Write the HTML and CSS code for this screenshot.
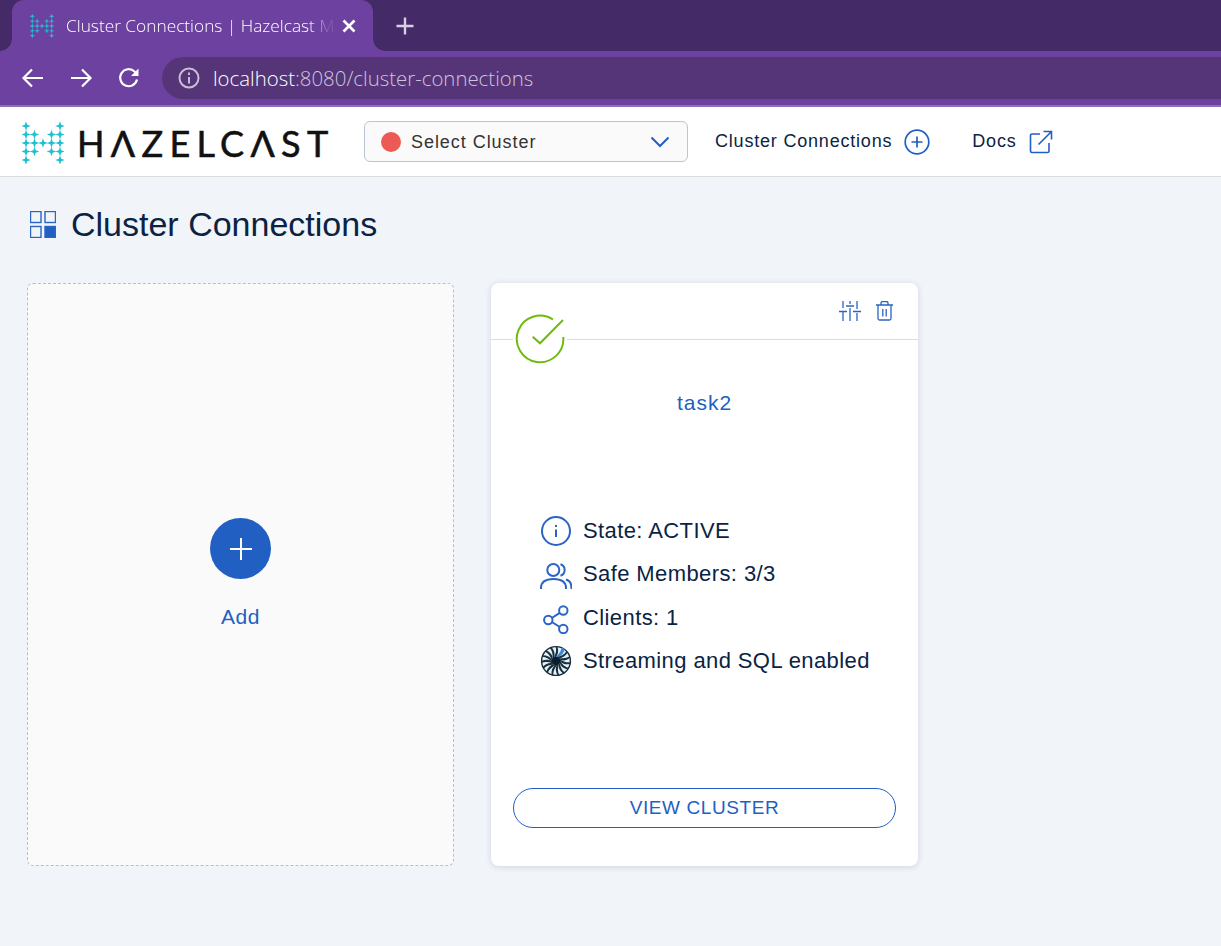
FILE: index.html
```html
<!DOCTYPE html>
<html lang="en">
<head>
<meta charset="utf-8">
<title>Cluster Connections | Hazelcast</title>
<link rel="stylesheet" href="styles.css">
</head>
<body>
<svg class="defs" width="0" height="0" aria-hidden="true">
  <defs>
    <path id="spark" d="M0-4.800 1.200-1.200 4.800 0 1.200 1.200 0 4.800-1.200 1.200-4.800 0-1.200-1.200Z"/>
    <g id="hzmark">
      <use href="#spark" x="4" y="4"/><use href="#spark" x="4" y="12.500"/><use href="#spark" x="4" y="21"/><use href="#spark" x="4" y="29.500"/><use href="#spark" x="4" y="38"/>
      <use href="#spark" x="12.500" y="12.500"/><use href="#spark" x="12.500" y="21"/><use href="#spark" x="12.500" y="29.500"/>
      <use href="#spark" x="21" y="21"/>
      <use href="#spark" x="29.500" y="12.500"/><use href="#spark" x="29.500" y="21"/><use href="#spark" x="29.500" y="29.500"/>
      <use href="#spark" x="38" y="4"/><use href="#spark" x="38" y="12.500"/><use href="#spark" x="38" y="21"/><use href="#spark" x="38" y="29.500"/><use href="#spark" x="38" y="38"/>
    </g>
    <path id="blade" d="M-.5-4C2.500-7 3-11 1.500-15.500L-.3-15.200C.8-11-.3-8-2-4Z"/>
    <path id="blade-wide" d="M-.5-4C3-7 4.500-11 3-15.500L-.3-15.200C.8-11-.3-8-2-4Z"/>
  </defs>
</svg>

<div class="tabstrip">
  <div class="tab">
    <svg class="favicon" viewBox="0 0 42 42"><use href="#hzmark"/></svg>
    <span class="tab-title">Cluster Connections | Hazelcast M</span>
    <svg class="tab-close" viewBox="0 0 14 14"><path d="M1.500 1.500l11 11M12.500 1.500l-11 11"/></svg>
  </div>
  <svg class="newtab" viewBox="0 0 18 18"><path d="M9 .5v17M.5 9h17"/></svg>
</div>

<div class="toolbar">
  <svg class="nav-icon" viewBox="0 0 24 24"><path d="M22 12H3M11 3.500 2.500 12l8.500 8.500"/></svg>
  <svg class="nav-icon" viewBox="0 0 24 24"><path d="M2 12h19M13 3.500 21.500 12 13 20.500"/></svg>
  <svg class="nav-icon" viewBox="0 0 24 24"><path d="M20 13.500A8.500 8.500 0 1 1 17.500 5.500L20 8"/><path class="solid" d="M21.500 2.500v7.500h-7.500Z"/></svg>
  <div class="omnibox">
    <svg class="info-chip" viewBox="0 0 22 22"><circle cx="11" cy="11" r="9.500"/><path d="M11 10v6.500M11 5.500v2.500"/></svg>
    <span class="url"><span class="host">localhost</span>:8080/cluster-connections</span>
  </div>
</div>

<header class="appbar">
  <a class="brand">
    <svg class="brand-mark" viewBox="0 0 42 42"><use href="#hzmark"/></svg>
    <span class="wordmark">HΛZELCΛST</span>
  </a>
  <div class="select">
    <span class="dot"></span>
    <span class="select-label">Select Cluster</span>
    <svg class="chevron" viewBox="0 0 20 12"><path d="M1.500 1.500 10 10l8.500-8.500"/></svg>
  </div>
  <a class="navlink nav-clusters">Cluster Connections
    <svg class="nav-glyph" viewBox="0 0 26 26"><circle cx="13" cy="13" r="11.800"/><path d="M13 7.500v11M7.500 13h11"/></svg>
  </a>
  <a class="navlink">Docs
    <svg class="nav-glyph docs-glyph" viewBox="0 0 24 24"><path d="M11 4H3a1.500 1.500 0 0 0-1.500 1.500V21A1.500 1.500 0 0 0 3 22.500h15.500A1.500 1.500 0 0 0 20 21v-8M9.500 14.500 22.500 1.500M14.500 1.500h8v8"/></svg>
  </a>
</header>

<main class="page">
  <div class="title-row">
    <svg class="title-icon" viewBox="0 0 26 27">
      <rect x=".5" y=".5" width="10.500" height="11"/><rect x="15" y=".5" width="10.500" height="11"/><rect x=".5" y="15.500" width="10.500" height="11"/><rect class="solid" x="15" y="15.500" width="10.500" height="11"/>
    </svg>
    <h1>Cluster Connections</h1>
  </div>
  <div class="cards">
    <section class="add-card">
      <span class="add-btn"><svg viewBox="0 0 24 24"><path d="M12 1v22M1 12h22"/></svg></span>
      <span class="add-label">Add</span>
    </section>
    <section class="card">
      <div class="card-head">
        <svg class="head-icon" viewBox="0 0 22 20"><path d="M4 0v7M4 11v9M11 0v3M11 7v13M18 0v8M18 12v8M0 10.500h8M7 5h8M14 10.500h8"/></svg>
        <svg class="head-icon trash" viewBox="0 0 17 20"><path d="M0 4h17M2 4v13.500A1.500 1.500 0 0 0 3.500 19h10a1.500 1.500 0 0 0 1.500-1.500V4M5 4V2a1.500 1.500 0 0 1 1.500-1.500h4A1.500 1.500 0 0 1 12 2v2M6.800 8v7.500M10.200 8v7.500"/></svg>
        <span class="status">
          <svg viewBox="0 0 50 50"><path d="M48.300 23A23.300 23.300 0 1 1 38 5.500"/><path d="M17.700 22.700 25 29.300 48 6"/></svg>
        </span>
      </div>
      <h2 class="card-name">task2</h2>
      <ul class="facts">
        <li><svg class="fact-icon" viewBox="0 0 32 32"><circle cx="16" cy="16" r="14"/><path d="M16 14.500v7.500M16 10v2"/></svg>State: ACTIVE</li>
        <li><svg class="fact-icon" viewBox="0 0 32 32"><circle cx="13.300" cy="12" r="6"/><path d="M1 31v-1c0-6 5-9 12.500-9s12.500 3 12.500 9v1M20.500 6.300a6 6 0 0 1 0 11.400M26 21.500c3.500 1 5.500 4 5.500 8.500v1"/></svg>Safe Members: 3/3</li>
        <li><svg class="fact-icon" viewBox="0 0 32 32"><circle cx="23.300" cy="8.500" r="4.200"/><circle cx="8.300" cy="18" r="4.200"/><circle cx="23.300" cy="27" r="4.200"/><path d="M11.800 16 19.800 10.800M11.800 20 19.800 25"/></svg>Clients: 1</li>
        <li><svg class="fact-icon turbine" viewBox="-17 -17 34 34">
          <circle class="t-bg" r="16"/><circle class="t-ring" r="15.300"/>
          <g class="t-blades">
            <use href="#blade" transform="rotate(0)"/><use href="#blade-wide" transform="rotate(24)" class="t-blue"/><use href="#blade" transform="rotate(48)"/><use href="#blade" transform="rotate(72)"/><use href="#blade" transform="rotate(96)"/><use href="#blade" transform="rotate(120)"/><use href="#blade" transform="rotate(144)"/><use href="#blade" transform="rotate(168)"/><use href="#blade" transform="rotate(192)"/><use href="#blade" transform="rotate(216)"/><use href="#blade" transform="rotate(240)"/><use href="#blade" transform="rotate(264)"/><use href="#blade" transform="rotate(288)"/><use href="#blade" transform="rotate(312)"/><use href="#blade" transform="rotate(336)"/>
          </g>
          <circle class="t-hub" r="4.500"/>
        </svg>Streaming and SQL enabled</li>
      </ul>
      <a class="view-btn">VIEW CLUSTER</a>
    </section>
  </div>
</main>
</body>
</html>
```
FILE: styles.css
```css
* { box-sizing: border-box; }
html, body { margin: 0; padding: 0; }
body {
  width: 1221px;
  height: 946px;
  overflow: hidden;
  background: #f1f4f9;
  font-family: "Liberation Sans", Arial, sans-serif;
  color: #0b2343;
}
.defs { position: absolute; }
#spark, #hzmark { fill: #1fc0d0; }

/* browser chrome */
.tabstrip {
  height: 51px;
  background: #442a66;
  display: flex;
  align-items: flex-end;
  padding-left: 12px;
}
.tab {
  position: relative;
  width: 361px;
  height: 51px;
  background: #6d41a0;
  border-radius: 12px 12px 0 0;
  display: flex;
  align-items: center;
  padding: 0 17px 0 18px;
  color: #fff;
}
.tab::before, .tab::after {
  content: "";
  position: absolute;
  bottom: 0;
  width: 12px;
  height: 12px;
  background: radial-gradient(circle at 0 0, #442a66 11.500px, #6d41a0 12px);
}
.tab::before { left: -12px; }
.tab::after { right: -12px; background: radial-gradient(circle at 100% 0, #442a66 11.500px, #6d41a0 12px); }
.favicon { width: 24px; height: 24px; flex: none; margin-right: 12px; }
.tab-title {
  flex: 1;
  min-width: 0;
  white-space: nowrap;
  font: 300 17.300px "Open Sans", sans-serif;
  -webkit-mask-image: linear-gradient(90deg, #000 88%, rgba(0, 0, 0, .15) 96%);
  mask-image: linear-gradient(90deg, #000 88%, rgba(0, 0, 0, .15) 96%);
}
.tab-close { width: 14px; height: 14px; flex: none; margin-left: 2px; fill: none; stroke: #fff; stroke-width: 2.600; }
.newtab { width: 18px; height: 18px; margin: 0 0 16px 23px; fill: none; stroke: #d9cfe5; stroke-width: 2.400; }

.toolbar {
  height: 56px;
  background: #6d41a0;
  border-bottom: 2px solid #8f6fb5;
  display: flex;
  align-items: flex-start;
  padding: 6px 0 0 21px;
}
.nav-icon { width: 24px; height: 24px; margin: 9px 24px 0 0; fill: none; stroke: #fff; stroke-width: 2.200; flex: none; }
.nav-icon .solid { fill: #fff; stroke: none; }
.omnibox {
  flex: 1;
  height: 42px;
  margin-left: -3px;
  background: #553577;
  border-radius: 21px 0 0 21px;
  display: flex;
  align-items: center;
  padding-left: 16px;
  font: 300 20.400px "Open Sans", sans-serif;
  color: #cfc3dd;
}
.info-chip { width: 22px; height: 22px; margin-right: 13px; fill: none; stroke: #c9bfd5; stroke-width: 2; flex: none; }
.host { color: #fff; }

/* app bar */
.appbar {
  height: 70px;
  background: #fff;
  border-bottom: 1px solid #dcdcdc;
  display: flex;
  align-items: center;
  padding-left: 22px;
}
.brand { display: flex; align-items: center; width: 342px; flex: none; }
.brand-mark { width: 42px; height: 42px; flex: none; margin-top: 2px; }
.wordmark {
  margin: 2px -20px 0 13px;
  font: 400 36px "Lato", sans-serif;
  letter-spacing: 6.300px;
  -webkit-text-stroke: .6px #111;
  color: #111;
  white-space: nowrap;
}
.select {
  width: 324px;
  height: 41px;
  flex: none;
  background: #fafafa;
  border: 1px solid #b9c5d6;
  border-radius: 6px;
  display: flex;
  align-items: center;
  padding: 0 17px 0 16px;
  font-size: 18px;
  letter-spacing: .95px;
  color: #333;
}
.dot { width: 20px; height: 20px; border-radius: 50%; background: #ec5a55; margin-right: 10px; flex: none; }
.select-label { flex: 1; padding-top: 1px; }
.chevron { width: 20px; height: 12px; fill: none; stroke: #225fc2; stroke-width: 2; }
.navlink {
  display: flex;
  align-items: center;
  font-size: 18px;
  letter-spacing: .8px;
  color: #0b2343;
  white-space: nowrap;
  margin-left: 27px;
}
.nav-clusters { margin-right: 15px; }
.nav-glyph { width: 26px; height: 26px; margin-left: 12px; fill: none; stroke: #225fc2; stroke-width: 1.700; flex: none; }
.docs-glyph { width: 24px; height: 24px; margin-left: 12px; stroke-width: 1.600; }

/* page */
.page { padding: 0 0 0 27px; }
.title-row { display: flex; align-items: center; height: 94px; margin-bottom: 12px; padding: 0 0 0 3px; }
.title-icon { width: 26px; height: 27px; margin-right: 15px; fill: none; stroke: #2a64c4; stroke-width: 1.400; flex: none; }
.title-icon .solid { fill: #225fc2; }
h1 { margin: 0; font-size: 34px; font-weight: 400; color: #0b2343; }
.cards { display: flex; gap: 37px; }
.add-card {
  width: 427px;
  height: 583px;
  background: #fafafa;
  border: 1px dashed #bdbdbd;
  border-radius: 6px;
  display: flex;
  flex-direction: column;
  align-items: center;
  padding-top: 234px;
}
.add-btn {
  width: 61px;
  height: 61px;
  border-radius: 50%;
  background: #225fc2;
  display: flex;
  align-items: center;
  justify-content: center;
}
.add-btn svg { width: 24px; height: 24px; fill: none; stroke: #fff; stroke-width: 2; }
.add-label { margin-top: 26px; font-size: 21px; letter-spacing: .5px; color: #225fc2; }

.card {
  width: 427px;
  height: 583px;
  background: #fff;
  border-radius: 8px;
  box-shadow: 0 1px 6px rgba(40, 60, 90, .16);
  display: flex;
  flex-direction: column;
  padding-bottom: 38px;
}
.card-head {
  position: relative;
  height: 57px;
  flex: none;
  border-bottom: 1px solid #dcdcdc;
  display: flex;
  justify-content: flex-end;
  align-items: flex-start;
  padding: 18px 25px 0 0;
  gap: 15px;
}
.head-icon { width: 22px; height: 20px; fill: none; stroke: #2a64c4; stroke-width: 1.300; }
.head-icon.trash { width: 17px; }
.status {
  position: absolute;
  left: 22px;
  top: 30px;
  width: 54px;
  height: 54px;
  background: #fff;
  padding: 1px 2px;
}
.status svg { display: block; width: 50px; height: 50px; fill: none; stroke: #6fbb0d; stroke-width: 2; }
.card-name {
  margin: 51px 0 0;
  text-align: center;
  font-size: 21px;
  font-weight: 400;
  letter-spacing: 1px;
  color: #225fc2;
}
.facts { list-style: none; margin: 94px 0 0 49px; padding: 0; }
.facts li {
  display: flex;
  align-items: center;
  height: 43.500px;
  font-size: 22px;
  letter-spacing: .4px;
  color: #0b2343;
  white-space: nowrap;
}
.fact-icon { width: 32px; height: 32px; margin-right: 11px; fill: none; stroke: #2a64c4; stroke-width: 2; flex: none; }
.turbine { stroke: none; }
.t-bg { fill: #eaf1f4; }
.t-ring { fill: none; stroke: #17303f; stroke-width: 1.500; }
.t-blades { fill: #17303f; }
.t-blue { fill: #3a8be0; }
.t-hub { fill: #0c1e2c; }
.view-btn {
  margin: auto 22px 0;
  height: 40px;
  border: 1px solid #225fc2;
  border-radius: 20px;
  display: flex;
  align-items: center;
  justify-content: center;
  font-size: 19px;
  letter-spacing: .6px;
  color: #225fc2;
}
```
